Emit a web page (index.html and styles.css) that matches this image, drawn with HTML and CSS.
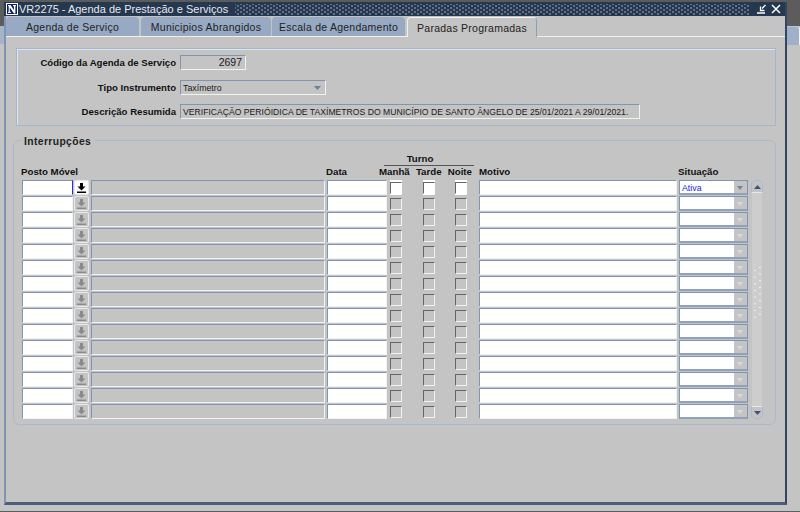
FILE: index.html
```html
<!DOCTYPE html>
<html lang="pt">
<head>
<meta charset="utf-8">
<title>VR2275</title>
<link rel="stylesheet" href="styles.css">
</head>
<body>
<div class="desktop">
  <div class="side left"><div class="side-top"></div><div class="side-tab"></div></div>
  <div class="win">
    <div class="titlebar">
      <svg class="logo" width="12" height="12" viewBox="0 0 12 12"><rect width="12" height="12" fill="#fff"/><rect x="1" y="1" width="10" height="10" fill="#10206a"/><path d="M2 2h2.500L8 7V3.200H7V2h3v1.200H9.400V10.500H8L3.800 4.500V8.800h1V10H2V8.800h.7V3.200H2z" fill="#fff"/></svg>
      <span class="title-text">VR2275 - Agenda de Prestação e Serviços</span>
      <span class="dots"></span>
      <svg class="winbtn" width="10" height="10" viewBox="0 0 10 10"><path d="M0 9h8" stroke="#fff" stroke-width="1.500"/><path d="M8.500 1L5 4.500M3.500 2.500v4h4" stroke="#fff" fill="none" stroke-width="1.300"/></svg>
      <svg class="winbtn close" width="10" height="10" viewBox="0 0 10 10"><path d="M1 1l8 8M9 1l-8 8" stroke="#fff" stroke-width="1.500"/></svg>
    </div>
    <div class="tabs">
      <div class="tab t1">Agenda de Serviço</div>
      <div class="tab t2">Municipios Abrangidos</div>
      <div class="tab t3">Escala de Agendamento</div>
      <div class="tab active">Paradas Programadas</div>
    </div>
    <div class="canvas">
      <section class="header-box">
        <div class="hrow r1"><label class="hlabel">Código da Agenda de Serviço</label><div class="ro code">2697</div></div>
        <div class="hrow r2"><label class="hlabel">Tipo Instrumento</label><div class="ro tipo">Taxímetro<svg class="arrow" width="7" height="4" viewBox="0 0 7 4"><path d="M0 0h7L3.500 4z" fill="#6f7f98"/></svg></div></div>
        <div class="hrow r3"><label class="hlabel">Descrição Resumida</label><div class="ro descr">VERIFICAÇÃO PERIÓIDICA DE TAXÍMETROS DO MUNICÍPIO DE SANTO ÂNGELO DE 25/01/2021 A 29/01/2021.</div></div>
      </section>
      <section class="group">
        <div class="legend">Interrupções</div>
        <div class="heads">
          <div class="h-posto">Posto Móvel</div>
          <div class="h-data">Data</div>
          <div class="h-turno"><div class="turno">Turno</div><div class="turnos"><span>Manhã</span><span>Tarde</span><span>Noite</span></div></div>
          <div class="h-motivo">Motivo</div>
          <div class="h-sit">Situação</div>
        </div>
        <div class="body">
          <div class="rows">
            <div class="row first"><div class="f posto focus"></div><div class="lov"><svg width="9" height="10" viewBox="0 0 9 10"><path d="M3 0h3v3.500h2.500L4.500 7.500.5 3.500H3zM0 8.500h9V10H0z"/></svg></div><div class="f d-desc"></div><div class="f data"></div><div class="cb"></div><div class="cb"></div><div class="cb"></div><div class="f motivo"></div><div class="f sit">Ativa<i class="drop"></i></div></div>
            <div class="row"><div class="f posto"></div><div class="lov"><svg width="9" height="10" viewBox="0 0 9 10"><path d="M3 0h3v3.500h2.500L4.500 7.500.5 3.500H3zM0 8.500h9V10H0z"/></svg></div><div class="f d-desc"></div><div class="f data"></div><div class="cb"></div><div class="cb"></div><div class="cb"></div><div class="f motivo"></div><div class="f sit"><i class="drop"></i></div></div>
            <div class="row"><div class="f posto"></div><div class="lov"><svg width="9" height="10" viewBox="0 0 9 10"><path d="M3 0h3v3.500h2.500L4.500 7.500.5 3.500H3zM0 8.500h9V10H0z"/></svg></div><div class="f d-desc"></div><div class="f data"></div><div class="cb"></div><div class="cb"></div><div class="cb"></div><div class="f motivo"></div><div class="f sit"><i class="drop"></i></div></div>
            <div class="row"><div class="f posto"></div><div class="lov"><svg width="9" height="10" viewBox="0 0 9 10"><path d="M3 0h3v3.500h2.500L4.500 7.500.5 3.500H3zM0 8.500h9V10H0z"/></svg></div><div class="f d-desc"></div><div class="f data"></div><div class="cb"></div><div class="cb"></div><div class="cb"></div><div class="f motivo"></div><div class="f sit"><i class="drop"></i></div></div>
            <div class="row"><div class="f posto"></div><div class="lov"><svg width="9" height="10" viewBox="0 0 9 10"><path d="M3 0h3v3.500h2.500L4.500 7.500.5 3.500H3zM0 8.500h9V10H0z"/></svg></div><div class="f d-desc"></div><div class="f data"></div><div class="cb"></div><div class="cb"></div><div class="cb"></div><div class="f motivo"></div><div class="f sit"><i class="drop"></i></div></div>
            <div class="row"><div class="f posto"></div><div class="lov"><svg width="9" height="10" viewBox="0 0 9 10"><path d="M3 0h3v3.500h2.500L4.500 7.500.5 3.500H3zM0 8.500h9V10H0z"/></svg></div><div class="f d-desc"></div><div class="f data"></div><div class="cb"></div><div class="cb"></div><div class="cb"></div><div class="f motivo"></div><div class="f sit"><i class="drop"></i></div></div>
            <div class="row"><div class="f posto"></div><div class="lov"><svg width="9" height="10" viewBox="0 0 9 10"><path d="M3 0h3v3.500h2.500L4.500 7.500.5 3.500H3zM0 8.500h9V10H0z"/></svg></div><div class="f d-desc"></div><div class="f data"></div><div class="cb"></div><div class="cb"></div><div class="cb"></div><div class="f motivo"></div><div class="f sit"><i class="drop"></i></div></div>
            <div class="row"><div class="f posto"></div><div class="lov"><svg width="9" height="10" viewBox="0 0 9 10"><path d="M3 0h3v3.500h2.500L4.500 7.500.5 3.500H3zM0 8.500h9V10H0z"/></svg></div><div class="f d-desc"></div><div class="f data"></div><div class="cb"></div><div class="cb"></div><div class="cb"></div><div class="f motivo"></div><div class="f sit"><i class="drop"></i></div></div>
            <div class="row"><div class="f posto"></div><div class="lov"><svg width="9" height="10" viewBox="0 0 9 10"><path d="M3 0h3v3.500h2.500L4.500 7.500.5 3.500H3zM0 8.500h9V10H0z"/></svg></div><div class="f d-desc"></div><div class="f data"></div><div class="cb"></div><div class="cb"></div><div class="cb"></div><div class="f motivo"></div><div class="f sit"><i class="drop"></i></div></div>
            <div class="row"><div class="f posto"></div><div class="lov"><svg width="9" height="10" viewBox="0 0 9 10"><path d="M3 0h3v3.500h2.500L4.500 7.500.5 3.500H3zM0 8.500h9V10H0z"/></svg></div><div class="f d-desc"></div><div class="f data"></div><div class="cb"></div><div class="cb"></div><div class="cb"></div><div class="f motivo"></div><div class="f sit"><i class="drop"></i></div></div>
            <div class="row"><div class="f posto"></div><div class="lov"><svg width="9" height="10" viewBox="0 0 9 10"><path d="M3 0h3v3.500h2.500L4.500 7.500.5 3.500H3zM0 8.500h9V10H0z"/></svg></div><div class="f d-desc"></div><div class="f data"></div><div class="cb"></div><div class="cb"></div><div class="cb"></div><div class="f motivo"></div><div class="f sit"><i class="drop"></i></div></div>
            <div class="row"><div class="f posto"></div><div class="lov"><svg width="9" height="10" viewBox="0 0 9 10"><path d="M3 0h3v3.500h2.500L4.500 7.500.5 3.500H3zM0 8.500h9V10H0z"/></svg></div><div class="f d-desc"></div><div class="f data"></div><div class="cb"></div><div class="cb"></div><div class="cb"></div><div class="f motivo"></div><div class="f sit"><i class="drop"></i></div></div>
            <div class="row"><div class="f posto"></div><div class="lov"><svg width="9" height="10" viewBox="0 0 9 10"><path d="M3 0h3v3.500h2.500L4.500 7.500.5 3.500H3zM0 8.500h9V10H0z"/></svg></div><div class="f d-desc"></div><div class="f data"></div><div class="cb"></div><div class="cb"></div><div class="cb"></div><div class="f motivo"></div><div class="f sit"><i class="drop"></i></div></div>
            <div class="row"><div class="f posto"></div><div class="lov"><svg width="9" height="10" viewBox="0 0 9 10"><path d="M3 0h3v3.500h2.500L4.500 7.500.5 3.500H3zM0 8.500h9V10H0z"/></svg></div><div class="f d-desc"></div><div class="f data"></div><div class="cb"></div><div class="cb"></div><div class="cb"></div><div class="f motivo"></div><div class="f sit"><i class="drop"></i></div></div>
            <div class="row"><div class="f posto"></div><div class="lov"><svg width="9" height="10" viewBox="0 0 9 10"><path d="M3 0h3v3.500h2.500L4.500 7.500.5 3.500H3zM0 8.500h9V10H0z"/></svg></div><div class="f d-desc"></div><div class="f data"></div><div class="cb"></div><div class="cb"></div><div class="cb"></div><div class="f motivo"></div><div class="f sit"><i class="drop"></i></div></div>
          </div>
          <div class="scroll">
            <div class="sbtn up"><svg width="7" height="4" viewBox="0 0 7 4"><path d="M0 4h7L3.500 0z" fill="#3c5478"/></svg></div>
            <div class="strack"><div class="grip"></div></div>
            <div class="sbtn down"><svg width="7" height="4" viewBox="0 0 7 4"><path d="M0 0h7L3.500 4z" fill="#3c5478"/></svg></div>
          </div>
        </div>
      </section>
    </div>
  </div>
  <div class="side right"><div class="side-top"></div><div class="side-tab"></div></div>
</div>
</body>
</html>
```
FILE: styles.css
```css
* { box-sizing: border-box; }
html, body { margin: 0; padding: 0; }
body {
  width: 800px; height: 512px; overflow: hidden;
  background: #c4c4c4;
  font-family: "Liberation Sans", Arial, sans-serif;
  font-size: 11px; color: #000;
}
.desktop {
  height: 512px; display: flex; align-items: flex-start;
  border-bottom: 1px solid #5a5f66;
}
.side { flex: none; }
.left { width: 4px; }
.right { width: 13px; }
.left .side-top { height: 26px; }
.left .side-tab { height: 18px; background: #a6b4c8; border-top: 0; border-right: 0; border-radius: 0; }
.side-top { height: 26px; background: #5c5c5c; }
.side-tab { height: 19px; background: #9fb0c8; border-radius: 0 4px 0 0; border-right: 1px solid #f4f4f4; border-top: 1px solid #b9c7da; }
.win {
  width: 783px; height: 503px; flex: none; margin-top: 2px;
  display: flex; flex-direction: column;
  background: #c4c4c4;
  border-left: 2px solid #7e95b5;
  border-right: 2px solid #33465f;
  border-bottom: 3px solid #4b5f7a;
  box-shadow: 0 -2px 0 #5c5c5c;
}
.titlebar {
  height: 14px; flex: none; margin-left: -2px;
  display: flex; align-items: center;
  background: #25384f;
  color: #e6eaf0;
  padding: 0 2px 0 2px;
}
.logo { flex: none; }
.title-text { font-size: 11px; white-space: nowrap; padding-left: 1px; }
.dots {
  flex: 1; height: 11px; margin: 0 6px 0 7px;
  background-image:
    radial-gradient(circle, #7f90a6 0.6px, transparent 0.9px),
    radial-gradient(circle, #7f90a6 0.6px, transparent 0.9px);
  background-size: 6px 4px;
  background-position: 0 0, 3px 2px;
}
.winbtn { flex: none; margin-left: 1px; }
.close { margin-left: 4px; margin-right: 2px; }
.tabs {
  height: 21px; flex: none; display: flex;
  background: #c4c4c4;
  border-bottom: 1px solid #f0f0f0;
  align-items: flex-end;
}
.tab {
  height: 19px; padding-top: 1px; font-size: 10.5px; letter-spacing: 0.25px;
  color: #222; display: flex; align-items: center; justify-content: center;
  background: #98aac3; border-radius: 4px 4px 0 0;
  white-space: nowrap;
}
.t1 { width: 133px; margin-right: 2px; }
.t2 { width: 130px; margin-right: 1px; }
.t3 { width: 133px; margin-right: 2px; }
.active {
  width: 130px; height: 20px; margin-bottom: -1px;
  background: #c4c4c4;
  border: 1px solid #f0f0f0; border-bottom: 0;
  border-right-color: #8da0ba;
}
.canvas { flex: 1; padding: 11px 0 0 7px; }
.header-box {
  width: 760px; height: 78px; margin-left: 3px;
  border: 1px solid #a4b6ce;
  box-shadow: inset 1px 1px 0 #e2e6ec;
  padding: 6px 0 0 0;
}
.hrow { display: flex; align-items: center; height: 15px; }
.r2 { margin-top: 10px; }
.r3 { margin-top: 9px; }
.hlabel { width: 159px; text-align: right; font-weight: 700; font-size: 9.6px; margin-right: 4px; color: #111; }
.ro {
  height: 15px; background: #c4c4c4;
  border: 1px solid #f2f2f2;
  border-top: 1px solid #7f95b4; border-left: 1px solid #7f95b4;
  font-size: 8.8px; line-height: 15px; padding-left: 2px;
  white-space: nowrap; position: relative; color: #1a1a1a;
}
.code { width: 66px; text-align: right; font-size: 10.5px; padding-right: 3px; line-height: 13px; }
.tipo { width: 146px; }
.arrow { position: absolute; right: 4px; top: 5px; }
.descr { width: 460px; font-size: 8.65px; line-height: 14px; }
.group {
  position: relative;
  width: 763px; height: 285px; margin-top: 14px;
  border: 1px solid #aab9ce;
  border-radius: 6px;
  padding: 0 0 0 7px;
}
.legend {
  position: absolute; left: 7px; top: -6px;
  background: #c4c4c4; padding: 0 4px 0 3px;
  font-weight: 700; font-size: 10.3px; letter-spacing: 0.4px; line-height: 14px; color: #222;
}
.heads { display: flex; height: 39px; padding-bottom: 2px; align-items: flex-end; font-weight: 700; font-size: 9.7px; line-height: 12px; color: #111; }
.h-posto { width: 305px; }
.h-data { width: 53px; }
.h-turno { width: 100px; }
.turno { text-align: center; border-bottom: 1px solid #555; height: 14px; padding-top: 1px; margin-left: 5px; width: 90px; padding-right: 18px; }
.turnos { display: flex; justify-content: space-between; width: 93px; }
.h-motivo { width: 199px; }
.h-sit { width: 60px; }
.body { display: flex; }
.rows { display: flex; flex-direction: column; gap: 1px; width: 727px; }
.row { display: flex; height: 15px; align-items: stretch; }
.f {
  background: #fff;
  border: 1px solid #f2f2f2;
  border-top: 1px solid #7f95b4; border-left: 1px solid #7f95b4;
  position: relative;
}
.posto { width: 51px; margin-left: 1px; }
.focus { border-right: 1px solid #2a2ae0; }
.lov {
  width: 15px; margin-left: 1px;
  background: #c4c4c4; display: flex; align-items: center; justify-content: center;
  border: 1px solid #e8e8e8; border-radius: 2px;
}
.lov svg { fill: #8a8a8a; }
.first .lov { background: #fff; }
.first .lov svg { fill: #000; }
.d-desc { width: 234px; margin-left: 2px; background: #c4c4c4; }
.data { width: 60px; margin-left: 2px; }
.cb { width: 12px; position: relative; padding-top: 2px; }
.cb::before {
  content: ""; display: block; width: 10px; height: 10px;
  border: 1px solid #f2f2f2; border-top-color: #666; border-left-color: #666;
}
.first .cb { background: #fff; }
.first .cb::before { border-color: #666 transparent transparent #666; }
.cb:nth-child(5) { margin-left: 3px; }
.cb:nth-child(6) { margin-left: 21px; }
.cb:nth-child(7) { margin-left: 20px; }
.motivo { width: 198px; margin-left: 12px; }
.sit { width: 69px; margin-left: 2px; font-size: 8.8px; color: #2222e6; line-height: 14px; padding-left: 2px; border-bottom: 2px solid #8fa1bb; border-right: 1px solid #7f95b4; }
.drop {
  position: absolute; right: 0; top: 0; bottom: 0; width: 13px; background: #c4c4c4;
}
.drop::after {
  content: ""; position: absolute; left: 3px; top: 5px;
  border: 3.5px solid transparent; border-top: 4px solid #d8d8d8; border-bottom: 0;
}
.first .drop::after { border-top-color: #74849c; }
.scroll { width: 12px; margin-left: 3px; display: flex; flex-direction: column; height: 239px; }
.sbtn { height: 13px; flex: none; display: flex; align-items: center; justify-content: center; border: 1px solid #aab9ce; }
.up { border-radius: 5px 5px 0 0; border-bottom-color: #e8e8e8; }
.down { border-radius: 0 0 5px 5px; border-top-color: #e8e8e8; }
.strack { flex: 1; background: #cdcdcd; position: relative; margin: 0 1px; }
.grip {
  position: absolute; left: 1px; top: 71px; width: 8px; height: 56px;
  background-image:
    radial-gradient(circle, #efefef 0.8px, transparent 1.1px),
    radial-gradient(circle, #efefef 0.8px, transparent 1.1px);
  background-size: 8px 6.7px;
  background-position: -2px 3px, 3px 0;
}
```
